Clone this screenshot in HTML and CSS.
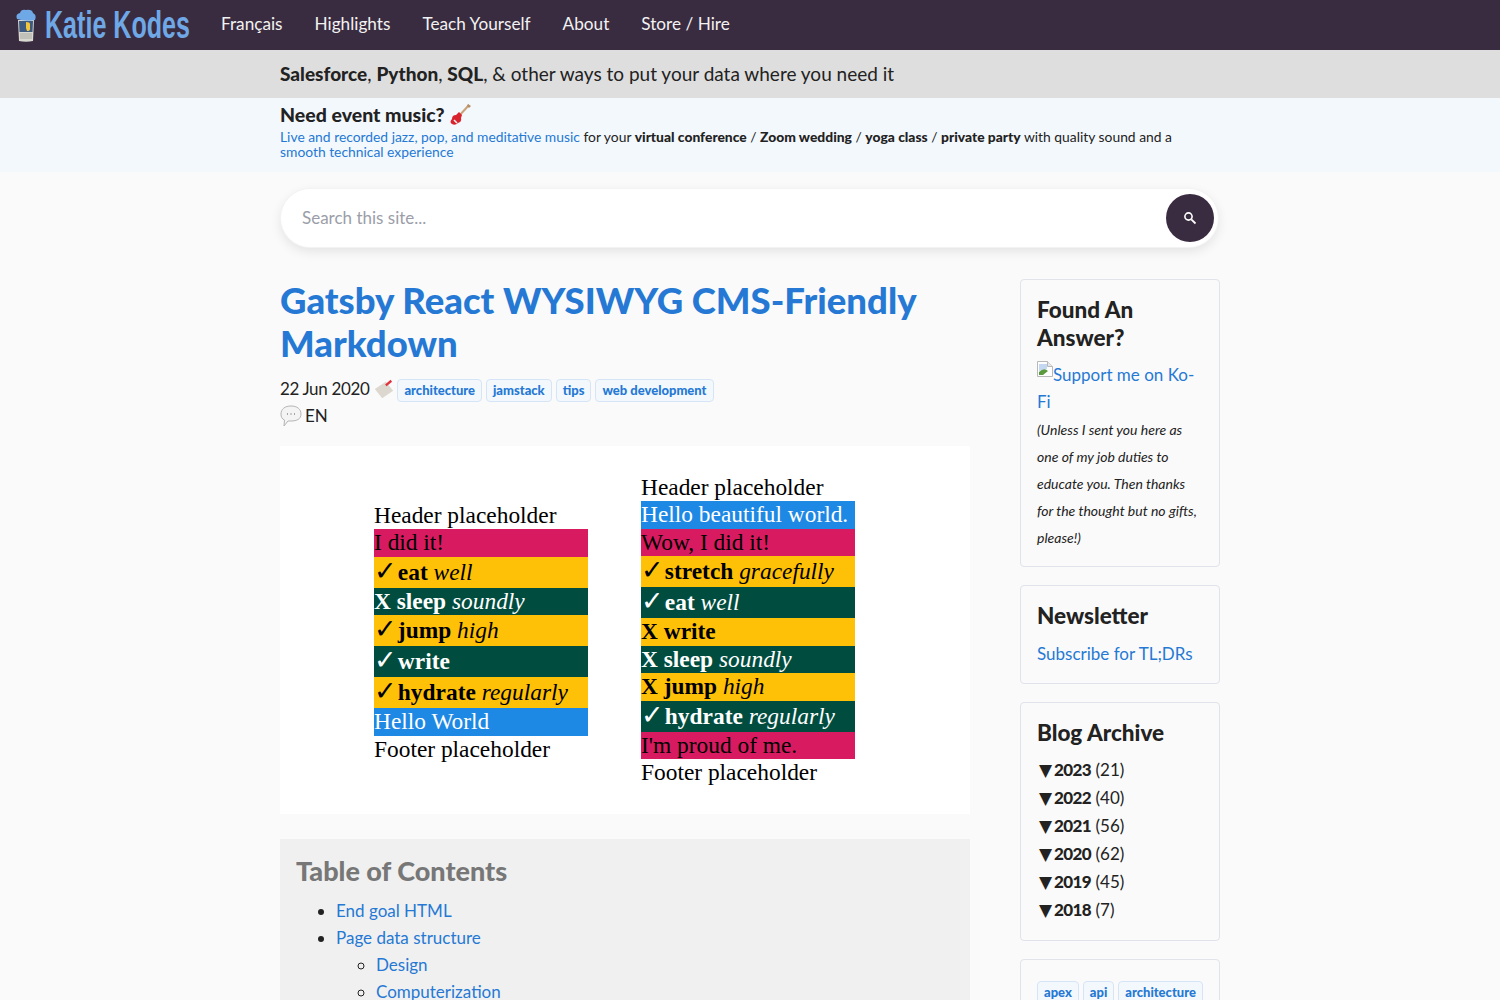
FILE: index.html
```html
<!DOCTYPE html>
<html lang="en">
<head>
<meta charset="utf-8">
<title>Gatsby React WYSIWYG CMS-Friendly Markdown</title>
<link rel="stylesheet" href="styles.css">
</head>
<body>
<nav class="topnav">
	<a class="brand" href="#">
		<svg class="brand-icon" width="22" height="34" viewBox="0 0 22 34">
			<path d="M3 12 L19 12 L18 33 Q11 34.500 4 33 Z" fill="#d9d9d2"/>
			<path d="M4 13 L18 13 L17.500 24 L4.500 24 Z" fill="#3d5a80"/>
			<path d="M11 14 Q15 14 15 16 L15 21 Q15 23 12 23 L11 20 Z" fill="#f2c53d"/>
			<path d="M5 26 H17 M5 28 H17 M5 30 H17" stroke="#a9a9a2" stroke-width="1"/>
			<path d="M2 11 Q0 6 5 5 Q6 1 11 2 Q17 1 18 5 Q22 7 20 12 Q11 14 2 11 Z" fill="#6fa8e6"/>
		</svg>
		<span class="brand-name">Katie Kodes</span>
	</a>
	<a href="#">Français</a>
	<a href="#">Highlights</a>
	<a href="#">Teach Yourself</a>
	<a href="#">About</a>
	<a href="#">Store / Hire</a>
</nav>

<div class="tagline">
	<div class="wrap"><b>Salesforce</b>, <b>Python</b>, <b>SQL</b>, &amp; other ways to put your data where you need it</div>
</div>

<div class="music">
	<div class="wrap">
		<div class="music-title">Need event music?
			<svg class="emoji" width="24" height="24" viewBox="0 0 24 24">
				<path d="M21 2 L11 13" stroke="#c9a27a" stroke-width="2"/>
				<path d="M20 1 L23 3 L21 5 L19 3 Z" fill="#b98d64"/>
				<path d="M11 9 L14 12 L13 15 Q14 19 10 20 Q7 23 4 21 Q1 19 4 16 Q4 12 8 12 Z" fill="#d8232f"/>
				<path d="M6 17 L9 20" stroke="#f3f3f3" stroke-width="1.500"/>
			</svg>
		</div>
		<div class="music-text"><a href="#">Live and recorded jazz, pop, and meditative music</a> for your <b>virtual conference</b> / <b>Zoom wedding</b> / <b>yoga class</b> / <b>private party</b> with quality sound and a <a href="#">smooth technical experience</a></div>
	</div>
</div>

<div class="wrap search-wrap">
	<div class="search">
		<span class="search-hint">Search this site...</span>
		<span class="search-btn">
			<svg width="14" height="14" viewBox="0 0 14 14" fill="none" stroke="#fff">
				<circle cx="5.500" cy="5.500" r="3.600" stroke-width="1.600"/>
				<path d="M8.300 8.300 L12.500 12.500" stroke-width="1.800"/>
			</svg>
		</span>
	</div>
</div>

<div class="wrap columns">
	<main class="article">
		<h1>Gatsby React WYSIWYG CMS-Friendly Markdown</h1>
		<div class="meta">
			<span class="date">22 Jun 2020</span>
			<svg class="emoji pin" width="22" height="22" viewBox="0 0 24 24">
				<path d="M2 12 L14 4 L22 14 L10 22 Z" fill="#ddd8cf"/>
				<path d="M14 8 L20 3" stroke="#e0323c" stroke-width="2.500"/>
			</svg>
			<a class="tag" href="#">architecture</a>
			<a class="tag" href="#">jamstack</a>
			<a class="tag" href="#">tips</a>
			<a class="tag" href="#">web development</a>
		</div>
		<div class="meta lang">
			<svg class="emoji" width="22" height="22" viewBox="0 0 22 22">
				<path d="M11 1 C17 1 21 4 21 9 C21 14 17 16 11 16 L8 16 L4 21 L4.500 15 C2 14 1 12 1 9 C1 4 5 1 11 1 Z" fill="#f4f4f4" stroke="#b5b5b5"/>
				<path d="M7 9 H8 M10.500 9 H11.500 M14 9 H15" stroke="#555" stroke-width="1.200"/>
			</svg>
			<span>EN</span>
		</div>

		<div class="figure">
			<div class="stack stack-low">
				<div class="plain">Header placeholder</div>
				<div class="band red">I did it!</div>
				<div class="band yellow tall"><span class="tick">✓</span> <b>eat</b> <i>well</i></div>
				<div class="band green"><b>X sleep</b> <i>soundly</i></div>
				<div class="band yellow tall"><span class="tick">✓</span> <b>jump</b> <i>high</i></div>
				<div class="band green tall"><span class="tick">✓</span> <b>write</b></div>
				<div class="band yellow tall"><span class="tick">✓</span> <b>hydrate</b> <i>regularly</i></div>
				<div class="band blue">Hello World</div>
				<div class="plain">Footer placeholder</div>
			</div>
			<div class="stack">
				<div class="plain">Header placeholder</div>
				<div class="band blue">Hello beautiful world.</div>
				<div class="band red">Wow, I did it!</div>
				<div class="band yellow tall"><span class="tick">✓</span> <b>stretch</b> <i>gracefully</i></div>
				<div class="band green tall"><span class="tick">✓</span> <b>eat</b> <i>well</i></div>
				<div class="band yellow"><b>X write</b></div>
				<div class="band green"><b>X sleep</b> <i>soundly</i></div>
				<div class="band yellow"><b>X jump</b> <i>high</i></div>
				<div class="band green tall"><span class="tick">✓</span> <b>hydrate</b> <i>regularly</i></div>
				<div class="band red">I'm proud of me.</div>
				<div class="plain">Footer placeholder</div>
			</div>
		</div>

		<div class="toc">
			<div class="toc-title">Table of Contents</div>
			<ul>
				<li><a href="#">End goal HTML</a></li>
				<li><a href="#">Page data structure</a>
					<ul>
						<li><a href="#">Design</a></li>
						<li><a href="#">Computerization</a></li>
					</ul>
				</li>
			</ul>
		</div>
	</main>

	<aside class="sidebar">
		<section class="card answer">
			<h3>Found An Answer?</h3>
			<a class="kofi" href="#"><svg class="broken" width="16" height="16" viewBox="0 0 16 16">
				<path d="M0.500 0.500 H10.500 L15.500 5.500 V15.500 H0.500 Z" fill="#fff" stroke="#b8b8b8"/>
				<path d="M10.500 0.500 V5.500 H15.500" fill="#e8e8e8" stroke="#b8b8b8"/>
				<path d="M2 3 H10 V8 L2 10 Z" fill="#c4d8f2"/>
				<path d="M2 14 L2 11 Q7 6 11 10 L6 14 Z" fill="#5a9a3c"/>
			</svg>Support me on Ko-Fi</a>
			<p class="note">(Unless I sent you here as one of my job duties to educate you. Then thanks for the thought but no gifts, please!)</p>
		</section>
		<section class="card">
			<h3 class="spaced">Newsletter</h3>
			<a href="#">Subscribe for TL;DRs</a>
		</section>
		<section class="card">
			<h3 class="spaced archive-title">Blog Archive</h3>
			<div class="year"><span class="arrow">▼</span><b>2023</b> (21)</div>
			<div class="year"><span class="arrow">▼</span><b>2022</b> (40)</div>
			<div class="year"><span class="arrow">▼</span><b>2021</b> (56)</div>
			<div class="year"><span class="arrow">▼</span><b>2020</b> (62)</div>
			<div class="year"><span class="arrow">▼</span><b>2019</b> (45)</div>
			<div class="year"><span class="arrow">▼</span><b>2018</b> (7)</div>
		</section>
		<section class="card tag-card">
			<a class="tag" href="#">apex</a>
			<a class="tag" href="#">api</a>
			<a class="tag" href="#">architecture</a>
		</section>
	</aside>
</div>
</body>
</html>
```

FILE: styles.css
```css
*{margin:0;padding:0;box-sizing:border-box;}
html,body{height:1000px;overflow:hidden;}
body{background:#fafafa;color:#222;font:17px/27px Lato,"Noto Sans",sans-serif;}
a{color:#2579d4;text-decoration:none;}
b{font-weight:900;}
.wrap{width:940px;margin:0 auto;}

.topnav{height:50px;background:#3a2c40;display:flex;align-items:center;gap:32px;padding:0 0 3px 15px;font-size:17.200px;}
.topnav a{color:#f2f2f2;}
.brand{display:flex;align-items:center;gap:8px;margin-top:3px;}
.brand-icon{display:block;}
.brand-name{color:#6fa8e6;font:bold 38px/44px "Liberation Sans",sans-serif;display:inline-block;width:144px;transform:scaleX(.66);transform-origin:left center;white-space:nowrap;}

.tagline{height:48px;background:#dedede;font-size:19px;line-height:48px;}
.music{height:74px;background:#f3f8fd;padding-top:4px;}
.music-title{font-size:19.500px;font-weight:900;line-height:26px;display:flex;align-items:center;gap:4px;}
.music-text{font-size:13.850px;line-height:15px;max-width:900px;margin-top:1px;}
.emoji{vertical-align:middle;flex:none;}

.search-wrap{padding:17px 2px 0 1px;}
.search{height:58px;background:#fff;border-radius:29px;box-shadow:0 0 0 1px #f3f3f3,0 4px 12px rgba(0,0,0,.1);display:flex;align-items:center;justify-content:space-between;padding:0 4px 0 21px;}
.search-hint{color:#9b9ea8;margin-top:-2px;}
.search-btn{width:48px;height:48px;border-radius:50%;background:#3a2c40;display:flex;align-items:center;justify-content:center;}

.columns{display:flex;justify-content:space-between;padding-top:32px;}
.article{width:690px;}
h1{color:#2579d4;font-size:36.500px;font-weight:900;line-height:43px;margin-bottom:10px;}
.meta{display:flex;align-items:center;gap:4px;height:27px;}
.meta .tag{margin-top:3px;}
.lang{gap:3px;}
.date{letter-spacing:-.35px;}
.pin{margin-right:-2px;}
.tag{display:inline-block;background:#f3f8fd;border:1px solid #d5e5f7;border-radius:4px;color:#2579d4;font-size:13px;font-weight:900;line-height:21px;padding:0 6px;white-space:nowrap;}

.figure{height:368px;margin-top:17px;background:#fff;display:flex;align-items:center;gap:53px;padding-left:94px;font-family:"Liberation Serif",serif;font-size:23.400px;}
.stack{width:214px;color:#000;}
.stack-low{margin-top:5px;}
.plain{height:27.500px;line-height:27.500px;}
.band{height:27.500px;line-height:27.500px;white-space:nowrap;}
.tall{height:31px;line-height:31px;}
.tick{display:inline-block;width:18px;font-family:"DejaVu Sans",sans-serif;font-size:27px;font-weight:bold;line-height:0;}
.red{background:#d81b60;}
.yellow{background:#ffc107;}
.green{background:#004d40;color:#fff;}
.blue{background:#1e88e5;color:#fff;}

.toc{margin-top:25px;background:#f0f0f0;padding:15px 16px;height:300px;}
.toc-title{color:#777;font-size:27px;font-weight:900;line-height:34px;margin-bottom:9px;}
.toc ul{padding-left:40px;}
.toc li{line-height:27px;}

.sidebar{width:200px;}
.card{background:#fafafa;border:1px solid #e0e3ea;border-radius:4px;padding:16px;margin-bottom:18px;}
.answer{padding-bottom:15px;}
.tag-card{display:flex;gap:4px;padding-top:21px;}
h3{font-size:22.500px;font-weight:900;line-height:28px;}
h3.spaced{margin-bottom:10px;}
h3.archive-title{margin-bottom:9px;}
.kofi{display:block;margin:9px 0 1px;}
.broken{vertical-align:4px;}
.note{font-size:14px;font-style:italic;line-height:27px;}
.year{white-space:nowrap;height:28px;line-height:28px;}
.year b{letter-spacing:-.6px;}
.arrow{font-family:"DejaVu Sans",sans-serif;line-height:0;padding:0 2px;}
```
